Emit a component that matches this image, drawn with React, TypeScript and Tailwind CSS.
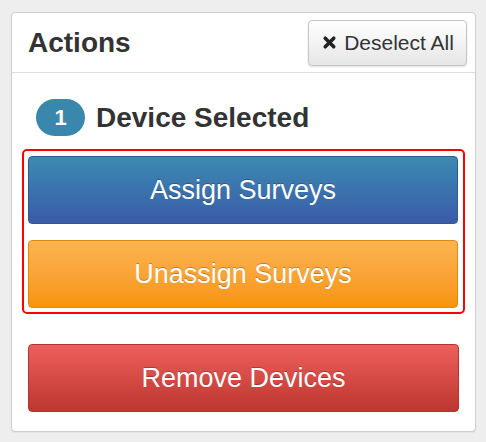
import { X } from 'lucide-react';

function ActionButton({ label, tone }: { label: string; tone: 'blue' | 'orange' | 'red' }) {
  const tones = {
    blue: 'bg-gradient-to-b from-[#3b8ab2] to-[#3a5ba8] border-[#2f5a8a]',
    orange: 'bg-gradient-to-b from-[#fbb450] to-[#f89406] border-[#e08a0e]',
    red: 'bg-gradient-to-b from-[#ee5f5b] to-[#bd362f] border-[#b3352f]',
  };
  return (
    <button
      type="button"
      className={`w-full h-[68px] flex items-center justify-center rounded-[4px] border text-white text-[27px] [text-shadow:0_-1px_0_rgba(0,0,0,0.25)] ${tones[tone]}`}
    >
      {label}
    </button>
  );
}

export default function App() {
  return (
    <div className="min-h-[442px] bg-[#eeeeee] pt-[12px] pl-[11px] pr-[10px] pb-[10px] font-['Liberation_Sans',Arial,sans-serif] text-[#333]">
      <div className="w-[465px] h-[420px] bg-white border border-[#cccccc] rounded-[4px] shadow-[0_1px_1px_rgba(0,0,0,0.05)] flex flex-col">
        {/* header */}
        <div className="h-[60px] flex items-center justify-between pl-[16px] pr-[8px] border-b border-[#dddddd]">
          <h2 className="text-[28px] font-bold leading-none">Actions</h2>
          <button
            type="button"
            className="h-[46px] w-[159px] flex items-center justify-center gap-[6px] rounded-[4px] border border-[#c5c5c5] bg-gradient-to-b from-white to-[#e6e6e6] shadow-[0_1px_2px_rgba(0,0,0,0.12)] text-[21px] text-[#333]"
          >
            <X size={17} strokeWidth={5} className="text-[#222]" />
            Deselect All
          </button>
        </div>
        {/* body */}
        <div className="px-[10px] pt-[26px] flex flex-col">
          <div className="flex items-center gap-[11px] ml-[14px] mb-[13px]">
            <span className="w-[49px] h-[37px] rounded-full bg-[#3a87ad] text-white font-bold text-[22px] flex items-center justify-center">1</span>
            <span className="text-[28px] font-bold leading-none">Device Selected</span>
          </div>
          <div className="border-2 border-[#ff0000] rounded-[5px] pt-[5px] pb-[4px] pl-[4px] pr-[5px] flex flex-col gap-[16px]">
            <ActionButton label="Assign Surveys" tone="blue" />
            <ActionButton label="Unassign Surveys" tone="orange" />
          </div>
          <div className="mt-[30px] px-[6px]">
            <ActionButton label="Remove Devices" tone="red" />
          </div>
        </div>
      </div>
    </div>
  );
}
